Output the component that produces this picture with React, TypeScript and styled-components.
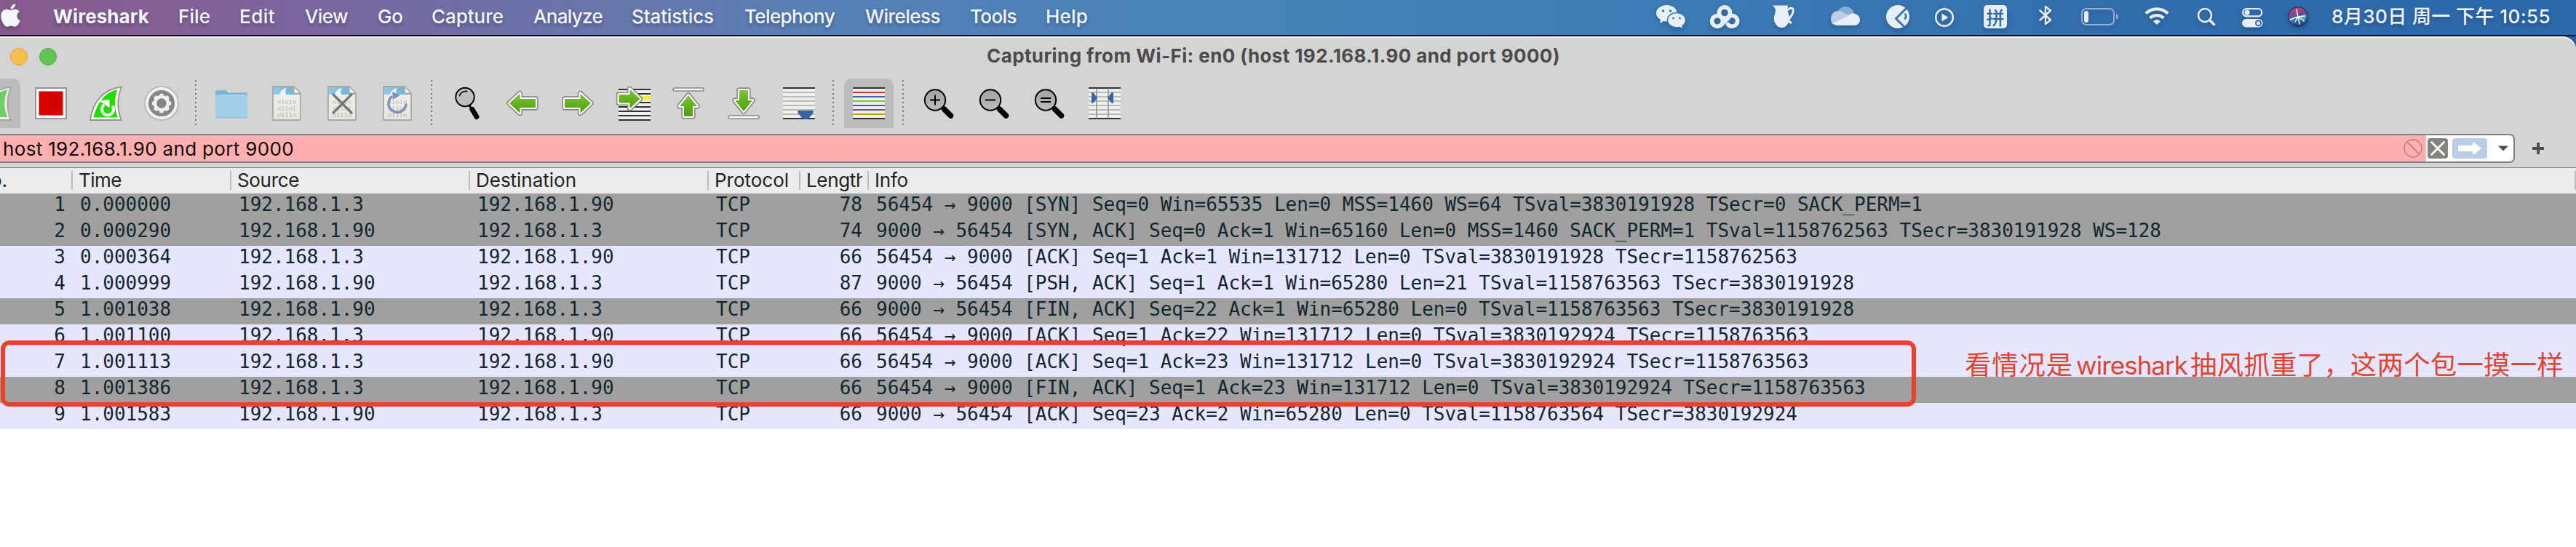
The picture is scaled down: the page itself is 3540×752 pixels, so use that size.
import React, { useLayoutEffect, useRef, useState } from 'react';
import styled, { createGlobalStyle } from 'styled-components';
import { FaApple } from 'react-icons/fa6';

const UI = `Inter, "Noto Sans CJK SC", sans-serif`;
const MONO = `"DejaVu Sans Mono", "Liberation Mono", monospace`;

const GlobalStyle = createGlobalStyle`
  html, body { margin: 0; padding: 0; background: #fff; }
  body { font-family: ${UI}; font-size: 26px; overflow: hidden; }
  * { box-sizing: border-box; }
  svg { display: block; flex: none; }
`;

const Screen = styled.div`
  position: relative;
  width: 3540px;
  height: 752px;
  overflow: hidden;
  background: #fff;
`;

/* ---------- text that tracks itself to a given width ---------- */

const Tracked = styled.span`
  display: inline-block;
  white-space: pre;
`;

function Fit({ text, width }: { text: string; width: number }) {
  const ref = useRef<HTMLSpanElement>(null);
  const [spacing, setSpacing] = useState(0);
  useLayoutEffect(() => {
    if (ref.current) {
      const natural = ref.current.getBoundingClientRect().width;
      setSpacing((width - natural) / text.length);
    }
  }, [text, width]);
  return (
    <Tracked ref={ref} style={{ letterSpacing: spacing }}>
      {text}
    </Tracked>
  );
}

/* ---------- menu bar ---------- */

const MenuBar = styled.header`
  display: flex;
  align-items: center;
  height: 50px;
  padding: 0 36px 2px 1px;
  color: #f3f6fb;
  border-bottom: 2px solid #0b1016;
  background: linear-gradient(90deg, #885b8c 0, #80639a 330px, #6f6ea6 650px, #6478ae 900px, #5580b5 1160px, #4983b9 1600px, #4382b8 1900px, #3b7ab5 2400px, #336fad 2850px, #2b67a9 3540px);
`;

const AppleLogo = styled(FaApple)`
  width: 27px;
  height: 36px;
  margin-top: -4px;
  filter: drop-shadow(0 3px 3px rgba(20, 20, 50, 0.3));
`;

const Menus = styled.nav`
  display: grid;
  grid-template-columns: 172px 84px 90px 100px 74px 140px 135px 155px 166px 144px 104px 60px;
  margin-left: 45px;
  line-height: 48px;
  text-shadow: 0 3px 4px rgba(20, 20, 50, 0.3);
`;

const MenuItem = styled.span<{ $bold?: boolean }>`
  font-weight: ${(p) => (p.$bold ? 700 : 500)};
`;

const StatusArea = styled.div`
  display: flex;
  align-items: center;
  margin-left: auto;
`;

const StatusIcon = styled.svg<{ $gap: number }>`
  margin-left: ${(p) => p.$gap}px;
  height: 48px;
  overflow: visible;
  filter: drop-shadow(0 3px 3px rgba(10, 30, 70, 0.3));
`;

const InputMethod = styled.span`
  display: flex;
  align-items: center;
  justify-content: center;
  width: 32px;
  height: 32px;
  margin-left: 41px;
  border-radius: 5px;
  background: #e9eff6;
  color: #2f6aa6;
  font: 500 25px/32px "Noto Sans CJK SC", sans-serif;
  box-shadow: 0 3px 4px rgba(10, 30, 70, 0.25);
`;

const Clock = styled.time`
  width: 300px;
  margin-left: 32px;
  line-height: 46px;
  font-weight: 500;
  white-space: nowrap;
  text-shadow: 0 3px 4px rgba(10, 30, 70, 0.3);
`;

const MENUS: [string, number][] = [
  ['Wireshark', 132], ['File', 44], ['Edit', 49], ['View', 59], ['Go', 35], ['Capture', 99],
  ['Analyze', 95], ['Statistics', 113], ['Telephony', 124], ['Wireless', 103], ['Tools', 64], ['Help', 58],
];

const W = '#e9eff6';

function StatusIcons() {
  return (
    <StatusArea>
      <StatusIcon $gap={0} width="40" viewBox="0 0 40 48">
        <path fill={W} d="M14.500 8C22.500 8 28.500 13 28.500 19 28.500 25.500 22.500 30.500 14.500 30.500c-1.500 0-3-.2-4.400-.6L5 33l1-5C2.300 26 0 22.800 0 19.200 0 13 6.500 8 14.500 8z" />
        <path fill={W} stroke="#3a78b3" strokeWidth="1.600" d="M28 18.500c7 0 12.500 4.600 12.500 10.200 0 3.200-1.700 6-4.500 7.900l.8 4.200-4.500-2.300c-1.400.3-2.800.5-4.300.5-7 0-12.500-4.600-12.500-10.300S21 18.500 28 18.500z" />
        <g fill="#3a78b3"><circle cx="9.500" cy="16" r="1.800" /><circle cx="19.500" cy="16" r="1.800" /><circle cx="23.500" cy="26" r="1.500" /><circle cx="32.500" cy="26" r="1.500" /></g>
      </StatusIcon>
      <StatusIcon $gap={34} width="40" viewBox="0 0 40 48" fill="none" stroke={W} strokeWidth="5.600" strokeLinecap="round">
        <circle cx="20" cy="18.500" r="7.600" />
        <circle cx="10" cy="30" r="7.400" />
        <path d="M24.500 34.500A7.400 7.400 0 1 0 24 26" />
        <path d="M15.500 35L25 26" />
      </StatusIcon>
      <StatusIcon $gap={46} width="30" viewBox="0 0 30 48">
        <path fill={W} d="M0 8.500h21c-.6 4.500-.4 7.500 1 11.500 1.500 5 1.400 11-2.500 15.800C17.600 38.300 15.500 39 12.500 39s-5.600-1-7.500-3.500C1.200 30.500 1.200 25 3 20c1.300-4 1.300-5.500-.3-8.500z" />
        <path fill="none" stroke={W} strokeWidth="3" d="M21 15c2-3.600 7.500-3.700 7.300.8-.2 5-4.600 9.500-7 13.200l4.600 4" />
      </StatusIcon>
      <StatusIcon $gap={50} width="40" viewBox="0 0 40 48">
        <path fill="#86add4" d="M8.500 20C10 13 15 10 20.500 10c6 0 10.500 4.500 11.500 10l-9 8z" />
        <path fill="#b9cfe6" d="M9.500 16c3-.4 6 .6 8.500 2.400L29 24 3 34.500C-1 31 -1 24 2.500 19.500 4 17.500 6.500 16.300 9.500 16z" />
        <path fill={W} d="M2.500 33L23.500 23.200c2-2.800 5-4.200 8.500-3.400 5 .8 8 4.500 8 9 0 4-3.500 7.200-8 7.200H9.500C6.500 36 4 35 2.500 33z" />
      </StatusIcon>
      <StatusIcon $gap={36} width="32" viewBox="0 0 32 48">
        <circle cx="16" cy="24" r="16" fill={W} />
        <path fill="none" stroke="#3874b0" strokeWidth="3" d="M28 12L13.500 26.500l12 12" />
        <path fill="none" stroke="#3874b0" strokeWidth="2.600" strokeLinecap="round" d="M26.300 20.500c1.200 2 1 4.300-.4 6.200" />
      </StatusIcon>
      <StatusIcon $gap={35} width="26" viewBox="0 0 26 48">
        <circle cx="13" cy="25" r="11.800" fill="none" stroke={W} strokeWidth="2.500" />
        <path fill={W} d="M9.500 19.500v11l9-5.500z" />
      </StatusIcon>
      <InputMethod>拼</InputMethod>
      <StatusIcon $gap={44} width="18" viewBox="0 0 18 48">
        <path fill="none" stroke={W} strokeWidth="2.400" strokeLinejoin="round" strokeLinecap="round" d="M1.500 15.500L16 28.500 9 34V10l7 5.500L1.500 28.500" />
      </StatusIcon>
      <StatusIcon $gap={40} width="51" viewBox="0 0 51 48">
        <rect x="1" y="13" width="44" height="22" rx="6" fill="none" stroke="#8fb1d5" strokeWidth="2" />
        <rect x="4" y="16" width="6" height="16" rx="3" fill={W} />
        <path fill="#8fb1d5" d="M48 20c4 1.500 4 6.500 0 8z" />
      </StatusIcon>
      <StatusIcon $gap={36} width="34" viewBox="0 0 34 48">
        <path fill={W} d="M17 35l-4.800-4.800c2.600-2.600 7-2.600 9.600 0z" />
        <path fill="none" stroke={W} strokeWidth="4.200" d="M7.600 25.800c5.300-5 13.500-5 18.800 0M1.800 19.500c8.500-8.300 21.900-8.300 30.400 0" />
      </StatusIcon>
      <StatusIcon $gap={38} width="26" viewBox="0 0 26 48" fill="none" stroke={W} strokeLinecap="round">
        <circle cx="11" cy="22" r="9" strokeWidth="2.600" />
        <path strokeWidth="3.600" d="M17.500 28.500l6 6" />
      </StatusIcon>
      <StatusIcon $gap={36} width="29" viewBox="0 0 29 48">
        <rect x="1.200" y="13" width="26" height="10.400" rx="5.200" fill="none" stroke={W} strokeWidth="2.200" />
        <circle cx="7" cy="18.200" r="3.600" fill={W} />
        <rect x="0" y="27" width="28.500" height="11.500" rx="5.700" fill={W} />
        <circle cx="22.500" cy="32.700" r="3.500" fill={W} stroke="#2e6aaa" strokeWidth="2" />
      </StatusIcon>
      <StatusIcon $gap={34} width="28" viewBox="0 0 28 48">
        <defs>
          <linearGradient id="siri" x1="0.300" y1="0" x2="0.500" y2="1">
            <stop offset="0" stopColor="#c43c78" /><stop offset="0.450" stopColor="#6d4c93" /><stop offset="0.600" stopColor="#2f7fb8" /><stop offset="1" stopColor="#27366f" />
          </linearGradient>
        </defs>
        <circle cx="14" cy="24" r="13.300" fill="url(#siri)" stroke="#2a2c5c" strokeWidth="1.200" />
        <path fill="#43d3c0" opacity="0.700" d="M14 24l11-3-2 8-8-3z" />
        <path stroke="#fff" strokeWidth="1.400" strokeLinecap="round" fill="none" d="M12 14l2 10 2 10M3 28l11-4 9-1M14 24l-4 7M14 24l8 6" />
      </StatusIcon>
      <Clock><Fit text="8月30日 周一 下午 10:55" width={301} /></Clock>
    </StatusArea>
  );
}

/* ---------- window ---------- */

const WindowBackdrop = styled.div`
  background: linear-gradient(90deg, #d4d4d4 3400px, #2b5f98 3500px);
  background-size: 100% 30px;
  background-repeat: no-repeat;
`;

const Window = styled.main`
  overflow: hidden;
  border-top-right-radius: 20px 18px;
  background: #d4d4d4;
  box-shadow: inset 0 2px 0 #efefef;
`;

const TitleBar = styled.div`
  display: flex;
  align-items: center;
  height: 56px;
  padding-left: 14px;
`;

const Light = styled.i<{ $fill: string; $edge: string }>`
  width: 24px;
  height: 24px;
  margin-right: 16px;
  border: 1px solid ${(p) => p.$edge};
  border-radius: 50%;
  background: ${(p) => p.$fill};
`;

const Title = styled.h1`
  width: 788px;
  margin: 0 0 3px 1262px;
  color: #4b4b4b;
  font-size: 26px;
  line-height: 50px;
  font-weight: 700;
  white-space: nowrap;
`;

const Toolbar = styled.div`
  display: flex;
  height: 78px;
  margin-left: -44px;
  padding-top: 2px;
`;

const ToolButton = styled.button<{ $active?: boolean }>`
  display: flex;
  align-items: center;
  justify-content: center;
  flex: none;
  width: 68px;
  height: 68px;
  margin: 0 4px;
  padding: 0;
  border: 0;
  border-radius: 10px 10px 0 0;
  background: ${(p) => (p.$active ? '#bcbcbc' : 'transparent')};
`;

const Separator = styled.i`
  flex: none;
  width: 20px;
  height: 64px;
  margin-top: 2px;
  background: repeating-linear-gradient(180deg, #6f6f6f 0 2px, transparent 2px 6px) 8px 0 / 2px 100% no-repeat;
`;

const Tool = ({ children }: { children: React.ReactNode }) => (
  <svg width="48" height="48" viewBox="0 0 48 48">{children}</svg>
);

const FIN = 'M2 47C5 25 17 5 45 1.500 39 16 39 32 44.500 47z';

const ShadeDefs = () => (
  <svg width="0" height="0" aria-hidden>
    <defs>
      <linearGradient id="leaf" x1="0" y1="0" x2="0" y2="1"><stop offset="0" stopColor="#7cc53a" /><stop offset="1" stopColor="#4e9f09" /></linearGradient>
      <linearGradient id="sky" x1="0" y1="0" x2="1" y2="0"><stop offset="0" stopColor="#92cbe9" /><stop offset="1" stopColor="#66add6" /></linearGradient>
      <linearGradient id="paper" x1="0" y1="0" x2="0" y2="1"><stop offset="0" stopColor="#f3f3f0" /><stop offset="1" stopColor="#e6e6dc" /></linearGradient>
      <linearGradient id="glass" x1="0" y1="0" x2="0" y2="1"><stop offset="0" stopColor="#a2a2a2" /><stop offset="1" stopColor="#bcbcbc" /></linearGradient>
    </defs>
  </svg>
);

const Sheet = () => (
  <>
    <path fill="url(#paper)" stroke="#a9aaa3" strokeWidth="1.800" d="M5 1h29l9 9v37H5z" />
    <path fill="url(#sky)" d="M6 2h27.500l8.500 9v1H6z" />
    <path fill="#f1f4f4" d="M14 12c1-4 4-8 9.500-9-1.500 3-1.500 6-.5 9z" />
    <path fill="#f2f2ea" stroke="#a9aaa3" strokeWidth="1.200" d="M34 1v9h9z" />
    <g fill="#b3b3ae" fontFamily="DejaVu Serif, serif" fontSize="8">
      <text x="11" y="25" textLength="26">01010</text>
      <text x="11" y="34" textLength="26">01101</text>
      <text x="11" y="43" textLength="26">01110</text>
    </g>
  </>
);

const Arrow = ({ d }: { d: string }) => (
  <>
    <path d={d} fill="#888" stroke="#888" strokeWidth="7.400" strokeLinejoin="round" />
    <path d={d} fill="#fff" stroke="#fff" strokeWidth="4.200" strokeLinejoin="round" />
    <path d={d} fill="url(#leaf)" />
  </>
);

const Lines = ({ colors }: { colors: string[] }) => (
  <>
    <rect x="2" y="2" width="44" height="44" fill="#efefed" />
    {colors.map((c, i) => <rect key={i} x="2" y={2 + i * 6} width="44" height="2" fill={c} />)}
  </>
);

const Lens = ({ sign }: { sign: string }) => (
  <>
    <path d="M31.500 32l9 9" stroke="#000" strokeWidth="7.500" strokeLinecap="round" />
    <path d="M26 27l4 4" stroke="#000" strokeWidth="3" />
    <circle cx="19" cy="19.500" r="14.200" fill="url(#glass)" stroke="#000" strokeWidth="2" />
    <path d={sign} stroke="#000" strokeWidth="2" />
  </>
);

const GREY = '#babdb6';
const INK = '#2e3436';
const STROKE_BLUE = '#3465a4';

const teeth = Array.from({ length: 8 }, (_, i) => i * 45);

function Tools() {
  return (
    <Toolbar>
      <ToolButton $active><Tool><path d={FIN} fill="#fff" stroke="#a0a0a0" strokeWidth="1.800" opacity="0.750" /><path d="M7 43C11 25 21 9 40 5.500 35 18 35 31 40 43z" fill="#6fce66" /></Tool></ToolButton>
      <ToolButton><Tool><rect x="3" y="3" width="42" height="42" fill="#fff" stroke="#949494" strokeWidth="2" /><rect x="7.500" y="7.500" width="33" height="33" fill="#d90000" /></Tool></ToolButton>
      <ToolButton>
        <Tool>
          <path d={FIN} fill="#fff" stroke="#949494" strokeWidth="1.800" />
          <path d="M6.500 43.500C11 25 21 9 39.500 5 34.500 18 35 31 40 43.500z" fill="#22dd00" />
          <path d="M32.500 27.500a8 8 0 1 1-11.500-1.500" fill="none" stroke="#fff" strokeWidth="4" />
          <path d="M14 20.500l14.500-1.500v11z" fill="#fff" />
        </Tool>
      </ToolButton>
      <ToolButton>
        <Tool>
          <circle cx="24" cy="24" r="23" fill="#f0f0f0" stroke="#b0b0b0" strokeWidth="1.600" />
          <circle cx="24" cy="24" r="18" fill="#858585" />
          <circle cx="24" cy="24" r="9" fill="none" stroke="#f0f0f0" strokeWidth="4.500" />
          {teeth.map((a) => <rect key={a} x="21.400" y="10.800" width="5.200" height="4" rx="1" fill="#f0f0f0" transform={`rotate(${a} 24 24)`} />)}
        </Tool>
      </ToolButton>
      <Separator />
      <ToolButton>
        <Tool>
          <path d="M2 9q0-3 3-3h10q2 0 3.500 2l1 1.500H43q3 0 3 3V20H2z" fill="#79b5d7" />
          <rect x="2" y="12" width="44" height="32" rx="2.500" fill="#a2cfe7" />
          <path d="M2.500 41.500q.5 2.500 3 2.500h37q2.500 0 3-2.500" fill="none" stroke="#87b4cf" strokeWidth="1.200" />
        </Tool>
      </ToolButton>
      <ToolButton><Tool><Sheet /></Tool></ToolButton>
      <ToolButton><Tool><Sheet /><path d="M12 12l25 25M37 12L12 37" stroke="#747678" strokeWidth="3.200" strokeLinecap="round" /></Tool></ToolButton>
      <ToolButton><Tool><Sheet /><path d="M17 14.500A12 12 0 1 0 36 24.500" fill="none" stroke="#7d93bb" strokeWidth="3.600" /><path d="M17 8l11 5-10 6z" fill="#7d93bb" /></Tool></ToolButton>
      <Separator />
      <ToolButton>
        <Tool>
          <path d="M26.500 26l4 7" stroke="#000" strokeWidth="3" />
          <path d="M31 32.500l6 10" stroke="#000" strokeWidth="7" strokeLinecap="round" />
          <circle cx="21" cy="15.500" r="12.700" fill="#bfbfbf" stroke="#000" strokeWidth="1.900" />
          <path d="M13.500 13.500c1.500-4 5.500-6.500 10-6" fill="none" stroke="#000" strokeWidth="1.800" strokeLinecap="round" />
        </Tool>
      </ToolButton>
      <ToolButton><Tool><Arrow d="M6 24L20.500 10.500V18H42v12H20.500v7.500z" /></Tool></ToolButton>
      <ToolButton><Tool><Arrow d="M42 24L27.500 10.500V18H6v12h21.500v7.500z" /></Tool></ToolButton>
      <ToolButton>
        <Tool>
          <rect x="4" y="4" width="44" height="44" fill="#efefed" />
          <rect x="4" y="14" width="44" height="6" fill="#fce94f" />
          {[4, 10, 22, 28, 34, 40, 46].map((y) => <rect key={y} x="4" y={y} width="44" height="2" fill={INK} />)}
          <Arrow d="M33.500 18L19.500 4.500V12H4.500v11.500h15V31z" />
        </Tool>
      </ToolButton>
      <ToolButton>
        <Tool>
          <rect x="3" y="3" width="42" height="4" rx="2" fill="#fff" stroke="#888" strokeWidth="1.600" />
          <Arrow d="M24 13L36 28h-6v14H18V28h-6z" />
        </Tool>
      </ToolButton>
      <ToolButton>
        <Tool>
          <rect x="3" y="41" width="42" height="4" rx="2" fill="#fff" stroke="#888" strokeWidth="1.600" />
          <Arrow d="M24 35L36 20h-6V6H18v14h-6z" />
        </Tool>
      </ToolButton>
      <ToolButton><Tool><Lines colors={[INK, GREY, GREY, GREY, GREY, GREY, GREY, INK]} /><path d="M22.500 34h21q1 2-.5 4l-5 6q-5 4-10 0l-5-6q-1.500-2-.5-4z" fill={STROKE_BLUE} /></Tool></ToolButton>
      <Separator />
      <ToolButton $active><Tool><Lines colors={[INK, '#e0302c', STROKE_BLUE, '#78cf20', STROKE_BLUE, '#75507b', '#c4a000', INK]} /></Tool></ToolButton>
      <Separator />
      <ToolButton><Tool><Lens sign="M12 19.500h14M19 12.500v14" /></Tool></ToolButton>
      <ToolButton><Tool><Lens sign="M12 19.500h14" /></Tool></ToolButton>
      <ToolButton><Tool><Lens sign="M12 17h14M12 22h14" /></Tool></ToolButton>
      <ToolButton>
        <Tool>
          <Lines colors={[INK, GREY, GREY, GREY, GREY, GREY, GREY, INK]} />
          <path d="M13 3v42M29 3v42" stroke="#888a85" strokeWidth="1.400" />
          <path d="M6 9.500q1.500-1 3 .5l4 5q1 1.500 0 3l-4 5q-1.500 1.500-3 .5zM36 9.500q-1.500-1-3 .5l-4 5q-1 1.500 0 3l4 5q1.500 1.500 3 .5z" fill={STROKE_BLUE} />
        </Tool>
      </ToolButton>
    </Toolbar>
  );
}

/* ---------- filter ---------- */

const FilterRow = styled.div`
  display: flex;
  align-items: flex-start;
  height: 46px;
`;

const FilterBox = styled.div`
  display: flex;
  width: 3456px;
  height: 40px;
  border: 2px solid #7f7f7d;
  border-left: 0;
  border-radius: 0 7px 7px 0;
  background: #fff;
  overflow: hidden;
`;

const FilterInput = styled.div`
  display: flex;
  flex: none;
  align-items: center;
  justify-content: space-between;
  width: 3334px;
  padding: 0 5px 0 4px;
  background: #ffafaf;
  color: #0c0c0c;
  line-height: 35px;
`;

const FilterActions = styled.div`
  display: flex;
  align-items: center;
  gap: 6px;
  padding-left: 2px;
`;

const AddButton = styled.button`
  margin: 12px 0 0 24px;
  padding: 0;
  border: 0;
  background: none;
`;

function Filter() {
  return (
    <FilterRow>
      <FilterBox>
        <FilterInput>
          <Fit text="host 192.168.1.90 and port 9000" width={400} />
          <svg width="26" height="26" viewBox="0 0 26 26" fill="none" stroke="#c98584" strokeWidth="1.800"><circle cx="13" cy="13" r="12" /><path d="M5 4l17 17.500" /></svg>
        </FilterInput>
        <FilterActions>
          <svg width="28" height="28" viewBox="0 0 28 28"><rect width="28" height="28" rx="4" fill="#82857f" /><path d="M5.500 5.500l17 17M22.500 5.500l-17 17" stroke="#fff" strokeWidth="2.600" strokeLinecap="round" /></svg>
          <svg width="48" height="28" viewBox="0 0 48 28"><rect width="48" height="28" rx="4" fill="#b9cde8" /><path d="M9 10h19V6.500q1-1 2.500 0l9.500 7.500-9.500 7.500q-1.500 1-2.500 0V18H9q-1 0-1-1v-6q0-1 1-1z" fill="#fff" /></svg>
          <svg width="30" height="28" viewBox="0 0 30 28"><path d="M9 10.500h14L16 17.500z" fill="#4e4e4e" /></svg>
        </FilterActions>
      </FilterBox>
      <AddButton><svg width="16" height="16" viewBox="0 0 16 16"><path d="M8 0v16M0 8h16" stroke="#4e4e4e" strokeWidth="4" /></svg></AddButton>
    </FilterRow>
  );
}

/* ---------- packet list ---------- */

const COLUMNS = '99px 218px 328px 328px 126px 94px 1fr';

const HeaderRow = styled.div`
  display: grid;
  grid-template-columns: ${COLUMNS};
  height: 36px;
  border-top: 1px solid #838383;
  background: #ececec;
  color: #222;
  line-height: 33px;
  white-space: nowrap;
`;

const HeaderCell = styled.div<{ $clip?: number }>`
  position: relative;
  padding-left: 9px;
  & > div { overflow: hidden; height: 35px; width: ${(p) => (p.$clip ? `${p.$clip}px` : 'auto')}; }
  &::before {
    content: '';
    position: absolute;
    left: -1px;
    top: 4px;
    width: 2px;
    height: 26px;
    background: #bdbdbd;
  }
`;

const NumberHeader = styled.div`
  display: flex;
  justify-content: flex-end;
  width: 10px;
  overflow: hidden;
`;

const PacketRow = styled.div<{ $dark: boolean }>`
  display: grid;
  grid-template-columns: ${COLUMNS};
  height: 36px;
  background: ${(p) => (p.$dark ? '#a0a0a0' : '#e7e6ff')};
  color: #12272e;
  font-family: ${MONO};
  font-size: 26px;
  letter-spacing: -0.025px;
  line-height: 30px;
  white-space: pre;
`;

const Cell = styled.span<{ $right?: number }>`
  padding-left: ${(p) => (p.$right === undefined ? 11 : 0)}px;
  padding-right: ${(p) => p.$right ?? 0}px;
  text-align: ${(p) => (p.$right === undefined ? 'left' : 'right')};
`;

const HEADERS: [string, number, number?][] = [
  ['Time', 59], ['Source', 85], ['Destination', 138], ['Protocol', 102], ['Length', 83, 77], ['Info', 46],
];

const A = '192.168.1.3';
const B = '192.168.1.90';

const PACKETS: [string, string, string, string, boolean, string][] = [
  ['0.000000', A, B, '78', true, '56454 → 9000 [SYN] Seq=0 Win=65535 Len=0 MSS=1460 WS=64 TSval=3830191928 TSecr=0 SACK_PERM=1'],
  ['0.000290', B, A, '74', true, '9000 → 56454 [SYN, ACK] Seq=0 Ack=1 Win=65160 Len=0 MSS=1460 SACK_PERM=1 TSval=1158762563 TSecr=3830191928 WS=128'],
  ['0.000364', A, B, '66', false, '56454 → 9000 [ACK] Seq=1 Ack=1 Win=131712 Len=0 TSval=3830191928 TSecr=1158762563'],
  ['1.000999', B, A, '87', false, '9000 → 56454 [PSH, ACK] Seq=1 Ack=1 Win=65280 Len=21 TSval=1158763563 TSecr=3830191928'],
  ['1.001038', B, A, '66', true, '9000 → 56454 [FIN, ACK] Seq=22 Ack=1 Win=65280 Len=0 TSval=1158763563 TSecr=3830191928'],
  ['1.001100', A, B, '66', false, '56454 → 9000 [ACK] Seq=1 Ack=22 Win=131712 Len=0 TSval=3830192924 TSecr=1158763563'],
  ['1.001113', A, B, '66', false, '56454 → 9000 [ACK] Seq=1 Ack=23 Win=131712 Len=0 TSval=3830192924 TSecr=1158763563'],
  ['1.001386', A, B, '66', true, '56454 → 9000 [FIN, ACK] Seq=1 Ack=23 Win=131712 Len=0 TSval=3830192924 TSecr=1158763563'],
  ['1.001583', B, A, '66', false, '9000 → 56454 [ACK] Seq=23 Ack=2 Win=65280 Len=0 TSval=1158763564 TSecr=3830192924'],
];

const PacketList = styled.section`
  position: relative;
  height: 522px;
  background: #fff;
`;

const ScrollEdge = styled.i`
  position: absolute;
  right: 0;
  top: 5px;
  width: 2px;
  height: 26px;
  background: #bdbdbd;
`;

const HighlightBox = styled.div`
  position: absolute;
  left: 1px;
  top: 238px;
  width: 2632px;
  height: 91px;
  border: 6px solid #e9412a;
  border-radius: 12px;
`;

const Note = styled.p`
  position: absolute;
  left: 2700px;
  top: 245px;
  display: flex;
  align-items: baseline;
  gap: 4px;
  margin: 0;
  color: #e0452f;
  font: 400 36.500px/54px Inter, "Noto Sans CJK SC", sans-serif;
  white-space: nowrap;
`;

const NoteLatin = styled.span`
  font-size: 35px;
`;

export default function App() {
  return (
    <Screen>
      <GlobalStyle />
      <ShadeDefs />
      <MenuBar>
        <AppleLogo />
        <Menus>
          {MENUS.map(([label, width], i) => (
            <MenuItem key={label} $bold={i === 0}><Fit text={label} width={width} /></MenuItem>
          ))}
        </Menus>
        <StatusIcons />
      </MenuBar>
      <WindowBackdrop>
        <Window>
          <TitleBar>
            <Light $fill="#f6be4f" $edge="#dba33c" />
            <Light $fill="#61c554" $edge="#4fa944" />
            <Title><Fit text="Capturing from Wi-Fi: en0 (host 192.168.1.90 and port 9000)" width={788} /></Title>
          </TitleBar>
          <Tools />
          <Filter />
          <PacketList>
            <HeaderRow>
              <NumberHeader>No.</NumberHeader>
              {HEADERS.map(([label, width, clip]) => (
                <HeaderCell key={label} $clip={clip}><div><Fit text={label} width={width} /></div></HeaderCell>
              ))}
            </HeaderRow>
            {PACKETS.map(([time, source, destination, length, dark, info], i) => (
              <PacketRow key={i} $dark={dark}>
                <Cell $right={9}>{i + 1}</Cell>
                <Cell>{time}</Cell>
                <Cell>{source}</Cell>
                <Cell>{destination}</Cell>
                <Cell>TCP</Cell>
                <Cell $right={8}>{length}</Cell>
                <Cell>{info}</Cell>
              </PacketRow>
            ))}
            <ScrollEdge />
            <HighlightBox />
            <Note>
              <Fit text="看情况是" width={149} />
              <NoteLatin><Fit text="wireshark" width={153} /></NoteLatin>
              <Fit text="抽风抓重了，这两个包一摸一样" width={513} />
            </Note>
          </PacketList>
        </Window>
      </WindowBackdrop>
    </Screen>
  );
}
